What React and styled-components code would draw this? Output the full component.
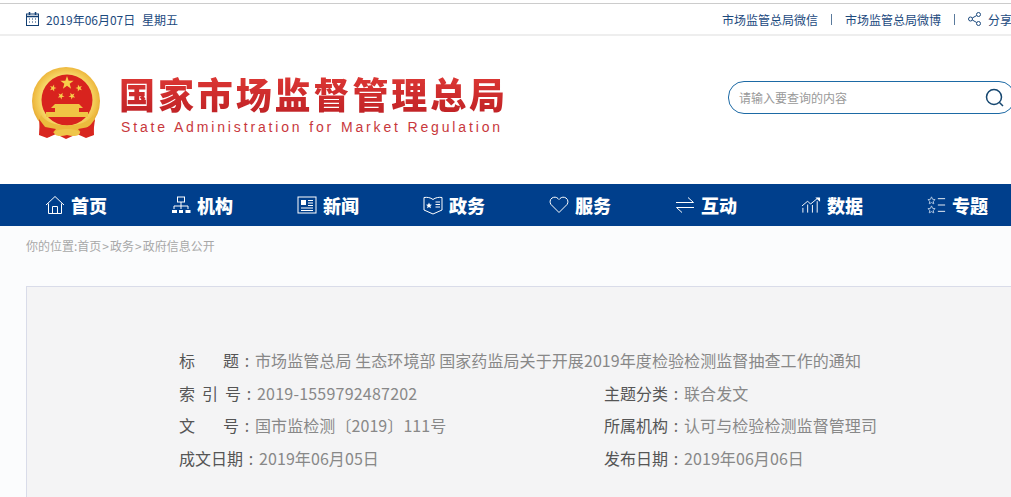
import React from "react";
import styled, { createGlobalStyle } from "styled-components";

const Global = createGlobalStyle`
  html, body { margin: 0; padding: 0; height: 497px; overflow: hidden; background: #fff; }
  #root { font-family: "Noto Sans CJK SC", "Liberation Sans", sans-serif; }
`;
const Page = styled.div`width: 1040px; height: 494px; padding-top: 3px; overflow: hidden;`;
const TopBar = styled.div`
  display: flex; align-items: center; height: 30px; padding: 0 28px 0 26px;
  border-top: 1px solid #ccc; border-bottom: 2px solid #eee;
  font-size: 12px; color: #1c4a7e;
`;
const DateBox = styled.div`display: flex; align-items: center; gap: 7px; word-spacing: 4px;`;
const TopLinks = styled.div`margin-left: auto; display: flex; align-items: center;`;
const Sep = styled.span`width: 1px; height: 11px; background: #5a7a9c; margin: 0 13px;`;
const Share = styled.span`display: flex; align-items: center; gap: 6px; white-space: nowrap;`;

const Header = styled.header`
  display: flex; align-items: flex-start; height: 148px; padding: 31px 25px 0 31px; box-sizing: border-box;
`;
const LogoText = styled.div`margin: 3px 0 0 16px; display: flex; flex-direction: column;`;
const CnTitle = styled.h1`
  margin: 0; font-size: 36px; line-height: 46px; font-weight: 900; letter-spacing: 2.9px; white-space: nowrap;
  color: #c9252a;
  background: linear-gradient(180deg, #e03a36, #bf2125);
  -webkit-background-clip: text; background-clip: text; -webkit-text-fill-color: transparent;
`;
const EnTitle = styled.div`
  font-family: "Liberation Sans", sans-serif; font-size: 14px; line-height: 16px; letter-spacing: 2.85px;
  color: #c8383c; white-space: nowrap; margin: 3px 0 0 2px;
`;
const Search = styled.div`
  margin: 14px 0 0 auto; width: 265px; height: 31px; border: 1px solid #1d6aa5; border-radius: 16px;
  display: flex; align-items: center; padding: 0 10px 0 10px; flex: none;
`;
const Placeholder = styled.span`font-size: 12px; color: #999; flex: 1;`;

const Nav = styled.nav`
  display: flex; height: 42px; background: #003f8c; padding-left: 45px; color: #fff;
`;
const NavItem = styled.a`
  flex: 0 0 126px; display: flex; align-items: center; gap: 6px;
  font-size: 18px; font-weight: 900; color: #fff; white-space: nowrap;
`;

const Crumbs = styled.div`
  height: 60px; background: #fbfcfd; padding: 11px 0 0 26px; box-sizing: border-box;
  font-size: 12px; line-height: 17px; color: #a8a8a8;
`;
const CrumbArrow = styled.span`margin: 0 1px;`;
const Main = styled.div`background: #fbfcfd; padding-left: 26px; height: 300px;`;
const Card = styled.section`
  height: 300px; box-sizing: border-box; background: #f4f4f5; border: 1px solid #d9dce9;
  padding: 57px 0 0 152px; font-size: 16px; line-height: 32.7px; color: #888;
`;
const Row = styled.div`display: flex; white-space: nowrap;`;
const Field = styled.div`display: flex; flex: ${p => p.$half ? "0 0 425px" : "0 0 auto"};`;
const Label = styled.span`
  width: ${p => p.$w || 64}px; color: #555; text-align-last: justify; flex: none;
`;
const Colon = styled.span`width: 16px; color: #666; flex: none; text-align: center;`;
const Value = styled.span`letter-spacing: ${p => p.$ls || 0.08}px;`;

const strokeProps = { fill: "none", stroke: "#fff", strokeWidth: 1 };

const icons = {
  home: <svg width="20" height="20" viewBox="0 0 20 20" {...strokeProps}><path d="M1 10 10 1.500 19 10M3.500 8.500V18.500H16.500V8.500M7.500 18.500V11.500H12.500V18.500" /></svg>,
  org: <svg width="20" height="18" viewBox="0 0 20 18" {...strokeProps}><rect x="6.500" y="1" width="7" height="5" /><path d="M10 6V10M3 13V10H17V13M10 10V13" /><g fill="#fff" stroke="none"><rect x="1" y="14" width="5" height="3" /><rect x="8" y="14" width="4" height="3" /><rect x="14.500" y="14" width="5" height="3" /></g></svg>,
  news: <svg width="20" height="18" viewBox="0 0 20 18" {...strokeProps}><rect x="1" y="1" width="18" height="16" /><rect x="4" y="4" width="5" height="5" fill="#fff" stroke="none" /><path d="M11 4.500H16M11 7H16M11 9.500H16M4 12H16M4 14.500H16" /></svg>,
  gov: <svg width="20" height="20" viewBox="0 0 20 20" {...strokeProps}><path d="M1 2.500C4 2 7.500 2.500 10 4.500 12.500 2.500 16 2 19 2.500V15L10 19 1 15Z" /><path d="M12.500 7H17M12.500 9.500H17M12.500 12H17" /><path d="M6 7.500 6.900 9.500 9 9.700 7.400 11.100 7.900 13.200 6 12.100 4.100 13.200 4.600 11.100 3 9.700 5.100 9.500Z" fill="#fff" stroke="none" /></svg>,
  heart: <svg width="20" height="18" viewBox="0 0 20 18" {...strokeProps}><path d="M10 16.500 2 8.500C.5 6.500.8 3.500 3 2 5 .7 7.500 1 9 2.500L10 3.500 11 2.500C12.500 1 15 .7 17 2 19.200 3.500 19.500 6.500 18 8.500Z" /></svg>,
  swap: <svg width="20" height="20" viewBox="0 0 20 20" {...strokeProps}><path d="M1 7.500H18.500L13 2.500M19 12.500H1.500L7 17.500" /></svg>,
  chart: <svg width="20" height="18" viewBox="0 0 21 18" {...strokeProps}><path d="M1 10 7 5 10 8 18 1.500M2 17V12M7 17V8.500M12 17V9M17 17V5" /><path d="M15 1H20V5.500Z" fill="#fff" stroke="none" /></svg>,
  stars: <svg width="19" height="20" viewBox="0 0 21 20" {...strokeProps}><path d="M5 1 6.200 3.700 9 4 6.900 5.900 7.500 8.700 5 7.300 2.500 8.700 3.100 5.900 1 4 3.800 3.700Z" stroke="#b9cde6" /><path d="M5 11 6.200 13.700 9 14 6.900 15.900 7.500 18.700 5 17.300 2.500 18.700 3.100 15.900 1 14 3.800 13.700Z" stroke="#b9cde6" /><path d="M12 3H20M12 10H20M12 17H20" /></svg>,
};

const Star = ({ x, y, r, rot = 0 }) => {
  const pts = [];
  for (let i = 0; i < 10; i++) {
    const a = (Math.PI / 5) * i - Math.PI / 2 + rot;
    const rr = i % 2 ? r * 0.4 : r;
    pts.push(`${(x + rr * Math.cos(a)).toFixed(2)},${(y + rr * Math.sin(a)).toFixed(2)}`);
  }
  return <polygon points={pts.join(" ")} fill="#f7cf4b" />;
};

const Emblem = () => (
  <svg width="72" height="74" viewBox="0 0 72 74" style={{ flex: "none" }}>
    <defs>
      <radialGradient id="ring" cx="50%" cy="48%" r="52%"><stop offset="72%" stopColor="#f6d667" /><stop offset="92%" stopColor="#eeb93f" /><stop offset="100%" stopColor="#e2a52e" /></radialGradient>
    </defs>
    <path d="M9 48 8 68 16 71 25 67 35 72 46 67 55 71 63 68 62 48Z" fill="#d8261f" />
    <circle cx="35" cy="34" r="34" fill="url(#ring)" />
    <circle cx="36" cy="33" r="25.500" fill="#d8231e" />
    <Star x={36} y={16} r={7} />
    <Star x={22} y={21} r={3.600} rot={0.3} />
    <Star x={48} y={21} r={3.600} rot={-0.3} />
    <Star x={30} y={29} r={3.600} rot={0.5} />
    <Star x={41} y={29} r={3.600} rot={-0.5} />
    <path d="M24 37H48L52 41H48V45H57V50H15V45H24V41H20Z" fill="#f0c544" />
    <path d="M10 48C18 62 54 62 62 48L64 54C52 68 20 68 8 54Z" fill="#ebbb3d" />
    <path d="M8 52 10 68 18 70 25 62 14 60ZM64 52 62 68 54 70 47 62 58 60Z" fill="#d8261f" />
    <path d="M23 65C28 61 44 61 49 65 49 69 43 70 36 68 29 70 23 69 23 65Z" fill="#efc64b" />
  </svg>
);

const navItems = [
  ["home", "首页"], ["org", "机构"], ["news", "新闻"], ["gov", "政务"],
  ["heart", "服务"], ["swap", "互动"], ["chart", "数据"], ["stars", "专题"],
];

export default function App() {
  return (
    <Page>
      <Global />
      <TopBar>
        <DateBox>
          <svg width="13" height="14" viewBox="0 0 13 14" fill="none" stroke="#123f73">
            <rect x=".5" y="2" width="12" height="11.500" />
            <path d="M.5 4.500H12.500M3.500 0V3M9.500 0V3" strokeWidth="1.500" />
            <path d="M3 7H4M6 7H7M9 7H10M3 10H4M6 10H7M9 10H10" />
          </svg>
          <span>2019年06月07日 星期五</span>
        </DateBox>
        <TopLinks>
          <span>市场监管总局微信</span>
          <Sep />
          <span>市场监管总局微博</span>
          <Sep />
          <Share>
            <svg width="14" height="14" viewBox="0 0 14 14" fill="none" stroke="#1c4a7e">
              <circle cx="10.500" cy="2.500" r="2" /><circle cx="2.500" cy="7" r="2" /><circle cx="10.500" cy="11.500" r="2" />
              <path d="M4.300 6 8.700 3.500M4.300 8 8.700 10.500" />
            </svg>
            分享
          </Share>
        </TopLinks>
      </TopBar>
      <Header>
        <Emblem />
        <LogoText>
          <CnTitle>国家市场监督管理总局</CnTitle>
          <EnTitle>State Administration for Market Regulation</EnTitle>
        </LogoText>
        <Search>
          <Placeholder>请输入要查询的内容</Placeholder>
          <svg width="19" height="19" viewBox="0 0 19 19" fill="none" stroke="#15466f" strokeWidth="1.500">
            <circle cx="9" cy="9" r="7.500" /><path d="M14.500 14.500 18 18" />
          </svg>
        </Search>
      </Header>
      <Nav>
        {navItems.map(([icon, label]) => (
          <NavItem key={label}>{icons[icon]}<span>{label}</span></NavItem>
        ))}
      </Nav>
      <Crumbs>你的位置:首页<CrumbArrow>&gt;</CrumbArrow>政务<CrumbArrow>&gt;</CrumbArrow>政府信息公开</Crumbs>
      <Main>
        <Card>
          <Row>
            <Field><Label $w={60}>标 题</Label><Colon>:</Colon><Value>市场监管总局 生态环境部 国家药监局关于开展2019年度检验检测监督抽查工作的通知</Value></Field>
          </Row>
          <Row>
            <Field $half><Label $w={62}>索 引 号</Label><Colon>:</Colon><Value $ls={0.22}>2019-1559792487202</Value></Field>
            <Field><Label>主题分类</Label><Colon>:</Colon><Value>联合发文</Value></Field>
          </Row>
          <Row>
            <Field $half><Label $w={60}>文 号</Label><Colon>:</Colon><Value>国市监检测〔2019〕111号</Value></Field>
            <Field><Label>所属机构</Label><Colon>:</Colon><Value>认可与检验检测监督管理司</Value></Field>
          </Row>
          <Row>
            <Field $half><Label>成文日期</Label><Colon>:</Colon><Value>2019年06月05日</Value></Field>
            <Field><Label>发布日期</Label><Colon>:</Colon><Value>2019年06月06日</Value></Field>
          </Row>
        </Card>
      </Main>
    </Page>
  );
}
